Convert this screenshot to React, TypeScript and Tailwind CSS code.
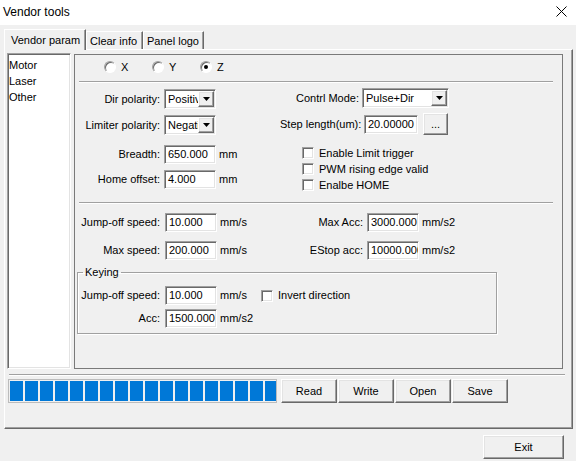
import type { ReactNode } from "react";

const sunken =
  "border border-t-[#a0a0a0] border-l-[#a0a0a0] border-b-white border-r-white shadow-[inset_1px_1px_0_#696969,inset_-1px_-1px_0_#e3e3e3]";
const raised =
  "border border-t-white border-l-white border-b-[#696969] border-r-[#696969] shadow-[inset_-1px_-1px_0_#a0a0a0,inset_1px_1px_0_#e3e3e3] bg-[#f0f0f0]";

function TextBox({ value, className }: { value: string; className: string }) {
  return (
    <div className={`${sunken} ${className} h-[19px] bg-white pl-[3px] overflow-hidden whitespace-nowrap leading-[17px]`}>
      {value}
    </div>
  );
}

function Arrow() {
  return (
    <svg width="7" height="4" viewBox="0 0 7 4">
      <polygon points="0,0 7,0 3.5,4" fill="#000" />
    </svg>
  );
}

function Combo({ value, className }: { value: string; className: string }) {
  return (
    <div className={`${sunken} ${className} h-[20px] bg-white flex items-stretch p-[1px]`}>
      <div className="flex-1 pl-[2px] overflow-hidden whitespace-nowrap leading-[16px]">{value}</div>
      <div className={`${raised} w-[16px] flex items-center justify-center`}>
        <Arrow />
      </div>
    </div>
  );
}

function Radio({ checked, label }: { checked?: boolean; label: string }) {
  return (
    <div className="w-[48px] flex items-center">
      <div className="w-[12px] h-[12px] rounded-full border border-t-[#a0a0a0] border-l-[#a0a0a0] border-b-white border-r-white bg-white shadow-[inset_1px_1px_0_#696969] flex items-center justify-center">
        {checked && <div className="w-[4px] h-[4px] rounded-full bg-black" />}
      </div>
      <span className="ml-[5px]">{label}</span>
    </div>
  );
}

function Check() {
  return <div className={`${sunken} w-[12px] h-[12px] bg-white`} />;
}

function Button({ children, className }: { children: ReactNode; className: string }) {
  return (
    <div className={`${raised} ${className} h-[24px] flex items-center justify-center`}>{children}</div>
  );
}

function Tab({ children, selected, className }: { children: ReactNode; selected?: boolean; className: string }) {
  return (
    <div
      className={
        "border border-b-0 border-t-white border-l-white border-r-[#696969] shadow-[inset_-1px_0_0_#a0a0a0] bg-[#f0f0f0] flex items-center " +
        className +
        (selected ? " relative z-10 h-[21px] -mb-[1px] pl-[6px] pt-[1px]" : " h-[18px] pl-[3px] pt-[1px]")
      }
    >
      {children}
    </div>
  );
}

function Sep({ className }: { className: string }) {
  return <div className={`border-t border-b border-t-[#a0a0a0] border-b-white ${className}`} />;
}

export default function App() {
  return (
    <div className="w-[576px] h-[461px] bg-[#f0f0f0] text-[11px] text-black font-['Liberation_Sans',Arial,sans-serif] overflow-hidden">
      {/* Title bar */}
      <div className="h-[25px] bg-white flex items-center justify-between pl-[3px] pr-[9px]">
        <span className="text-[12px] -mt-[2px]">Vendor tools</span>
        <svg width="11" height="11" viewBox="0 0 11 11" className="-mt-[2px]">
          <path d="M0.5 0.5L10.5 10.5M10.5 0.5L0.5 10.5" stroke="#000" strokeWidth="1" />
        </svg>
      </div>

      <div className="pl-[4px] mt-[4px]">
        {/* Tabs */}
        <div className="flex items-end h-[20px]">
          <Tab selected className="w-[82px]">Vendor param</Tab>
          <Tab className="w-[57px]">Clear info</Tab>
          <Tab className="w-[61px]">Panel logo</Tab>
        </div>

        {/* Tab page */}
        <div className="w-[569px] h-[380px] border border-t-white border-l-white border-b-[#696969] border-r-[#696969] shadow-[inset_-1px_-1px_0_#a0a0a0]">
          <div className="flex gap-[3px] pt-[3px] pl-[2px]">
            {/* List */}
            <div className={`${sunken} w-[64px] h-[316px] bg-white pt-[3px] pl-[1px] leading-[16px]`}>
              <div>Motor</div>
              <div>Laser</div>
              <div>Other</div>
            </div>

            {/* Panel */}
            <div className="mt-[1px] w-[489px] h-[315px] border border-[#7a7a7a]">
              <div className="h-[24px] flex items-center pl-[29px]">
                <Radio label="X" />
                <Radio label="Y" />
                <Radio label="Z" checked />
              </div>
              <Sep className="mt-[2px] ml-[4px] w-[474px]" />

              <div className="h-[119px] flex">
                <div className="w-[205px] pt-[6px]">
                  <div className="h-[20px] flex items-center">
                    <span className="w-[85px] text-right">Dir polarity:</span>
                    <Combo value="Positive" className="ml-[4px] w-[52px]" />
                  </div>
                  <div className="mt-[6px] h-[20px] flex items-center">
                    <span className="w-[85px] text-right">Limiter polarity:</span>
                    <Combo value="Negative" className="ml-[4px] w-[52px]" />
                  </div>
                  <div className="mt-[10px] h-[19px] flex items-center">
                    <span className="w-[85px] text-right">Breadth:</span>
                    <TextBox value="650.000" className="ml-[4px] w-[52px]" />
                    <span className="ml-[3px]">mm</span>
                  </div>
                  <div className="mt-[6px] h-[19px] flex items-center">
                    <span className="w-[85px] text-right">Home offset:</span>
                    <TextBox value="4.000" className="ml-[4px] w-[52px]" />
                    <span className="ml-[3px]">mm</span>
                  </div>
                </div>

                <div className="pt-[5px]">
                  <div className="h-[20px] flex items-center">
                    <span className="w-[79px] text-right">Contrl Mode:</span>
                    <Combo value="Pulse+Dir" className="ml-[3px] w-[87px]" />
                  </div>
                  <div className="mt-[5px] h-[22px] flex items-center">
                    <span className="w-[81px] text-right whitespace-nowrap">Step length(um):</span>
                    <TextBox value="20.00000" className="ml-[3px] w-[54px]" />
                    <Button className="ml-[5px] w-[25px] !h-[22px]">
                      <span className="mt-[1px]">...</span>
                    </Button>
                  </div>
                  <div className="mt-[10px] pl-[22px]">
                    {["Enable Limit trigger", "PWM rising edge valid", "Enalbe HOME"].map((t) => (
                      <div key={t} className="h-[16px] flex items-center">
                        <Check />
                        <span className="ml-[5px]">{t}</span>
                      </div>
                    ))}
                  </div>
                </div>
              </div>

              <Sep className="ml-[4px] w-[474px]" />

              <div className="mt-[9px] h-[19px] flex items-center">
                <div className="w-[215px] flex items-center">
                  <span className="w-[85px] text-right">Jump-off speed:</span>
                  <TextBox value="10.000" className="ml-[5px] w-[52px]" />
                  <span className="ml-[3px]">mm/s</span>
                </div>
                <span className="w-[73px] text-right">Max Acc:</span>
                <TextBox value="3000.000" className="ml-[4px] w-[52px]" />
                <span className="ml-[3px]">mm/s2</span>
              </div>
              <div className="mt-[9px] h-[19px] flex items-center">
                <div className="w-[215px] flex items-center">
                  <span className="w-[85px] text-right">Max speed:</span>
                  <TextBox value="200.000" className="ml-[5px] w-[52px]" />
                  <span className="ml-[3px]">mm/s</span>
                </div>
                <span className="w-[73px] text-right">EStop acc:</span>
                <TextBox value="10000.000" className="ml-[4px] w-[52px]" />
                <span className="ml-[3px]">mm/s2</span>
              </div>

              <fieldset className="mt-[6px] ml-[2px] w-[420px] h-[68px] border border-[#a0a0a0] shadow-[inset_1px_1px_0_#fff,1px_1px_0_#fff]">
                <legend className="ml-[5px] px-[2px] leading-[13px]">Keying</legend>
                <div className="mt-[7px] h-[19px] flex items-center">
                  <span className="w-[82px] text-right">Jump-off speed:</span>
                  <TextBox value="10.000" className="ml-[5px] w-[52px]" />
                  <span className="ml-[3px] w-[41px]">mm/s</span>
                  <Check />
                  <span className="ml-[5px]">Invert direction</span>
                </div>
                <div className="mt-[4px] h-[19px] flex items-center">
                  <span className="w-[82px] text-right">Acc:</span>
                  <TextBox value="1500.000" className="ml-[5px] w-[52px]" />
                  <span className="ml-[3px]">mm/s2</span>
                </div>
              </fieldset>
            </div>
          </div>

          <Sep className="mt-[5px] ml-[4px] w-[556px]" />

          <div className="mt-[3px] ml-[3px] flex items-center">
            <div className="w-[269px] h-[24px] border border-[#bcbcbc] p-[1px] flex gap-[2px] overflow-hidden">
              {Array.from({ length: 18 }).map((_, i) => (
                <div key={i} className="w-[13px] shrink-0 h-full bg-[#0078d7]" />
              ))}
            </div>
            <div className="ml-[4px] flex gap-[1px]">
              <Button className="w-[56px]">Read</Button>
              <Button className="w-[56px]">Write</Button>
              <Button className="w-[56px]">Open</Button>
              <Button className="w-[56px]">Save</Button>
            </div>
          </div>
        </div>
      </div>

      <div className="mt-[6px] flex justify-end pr-[12px]">
        <Button className="w-[81px]">Exit</Button>
      </div>
    </div>
  );
}
